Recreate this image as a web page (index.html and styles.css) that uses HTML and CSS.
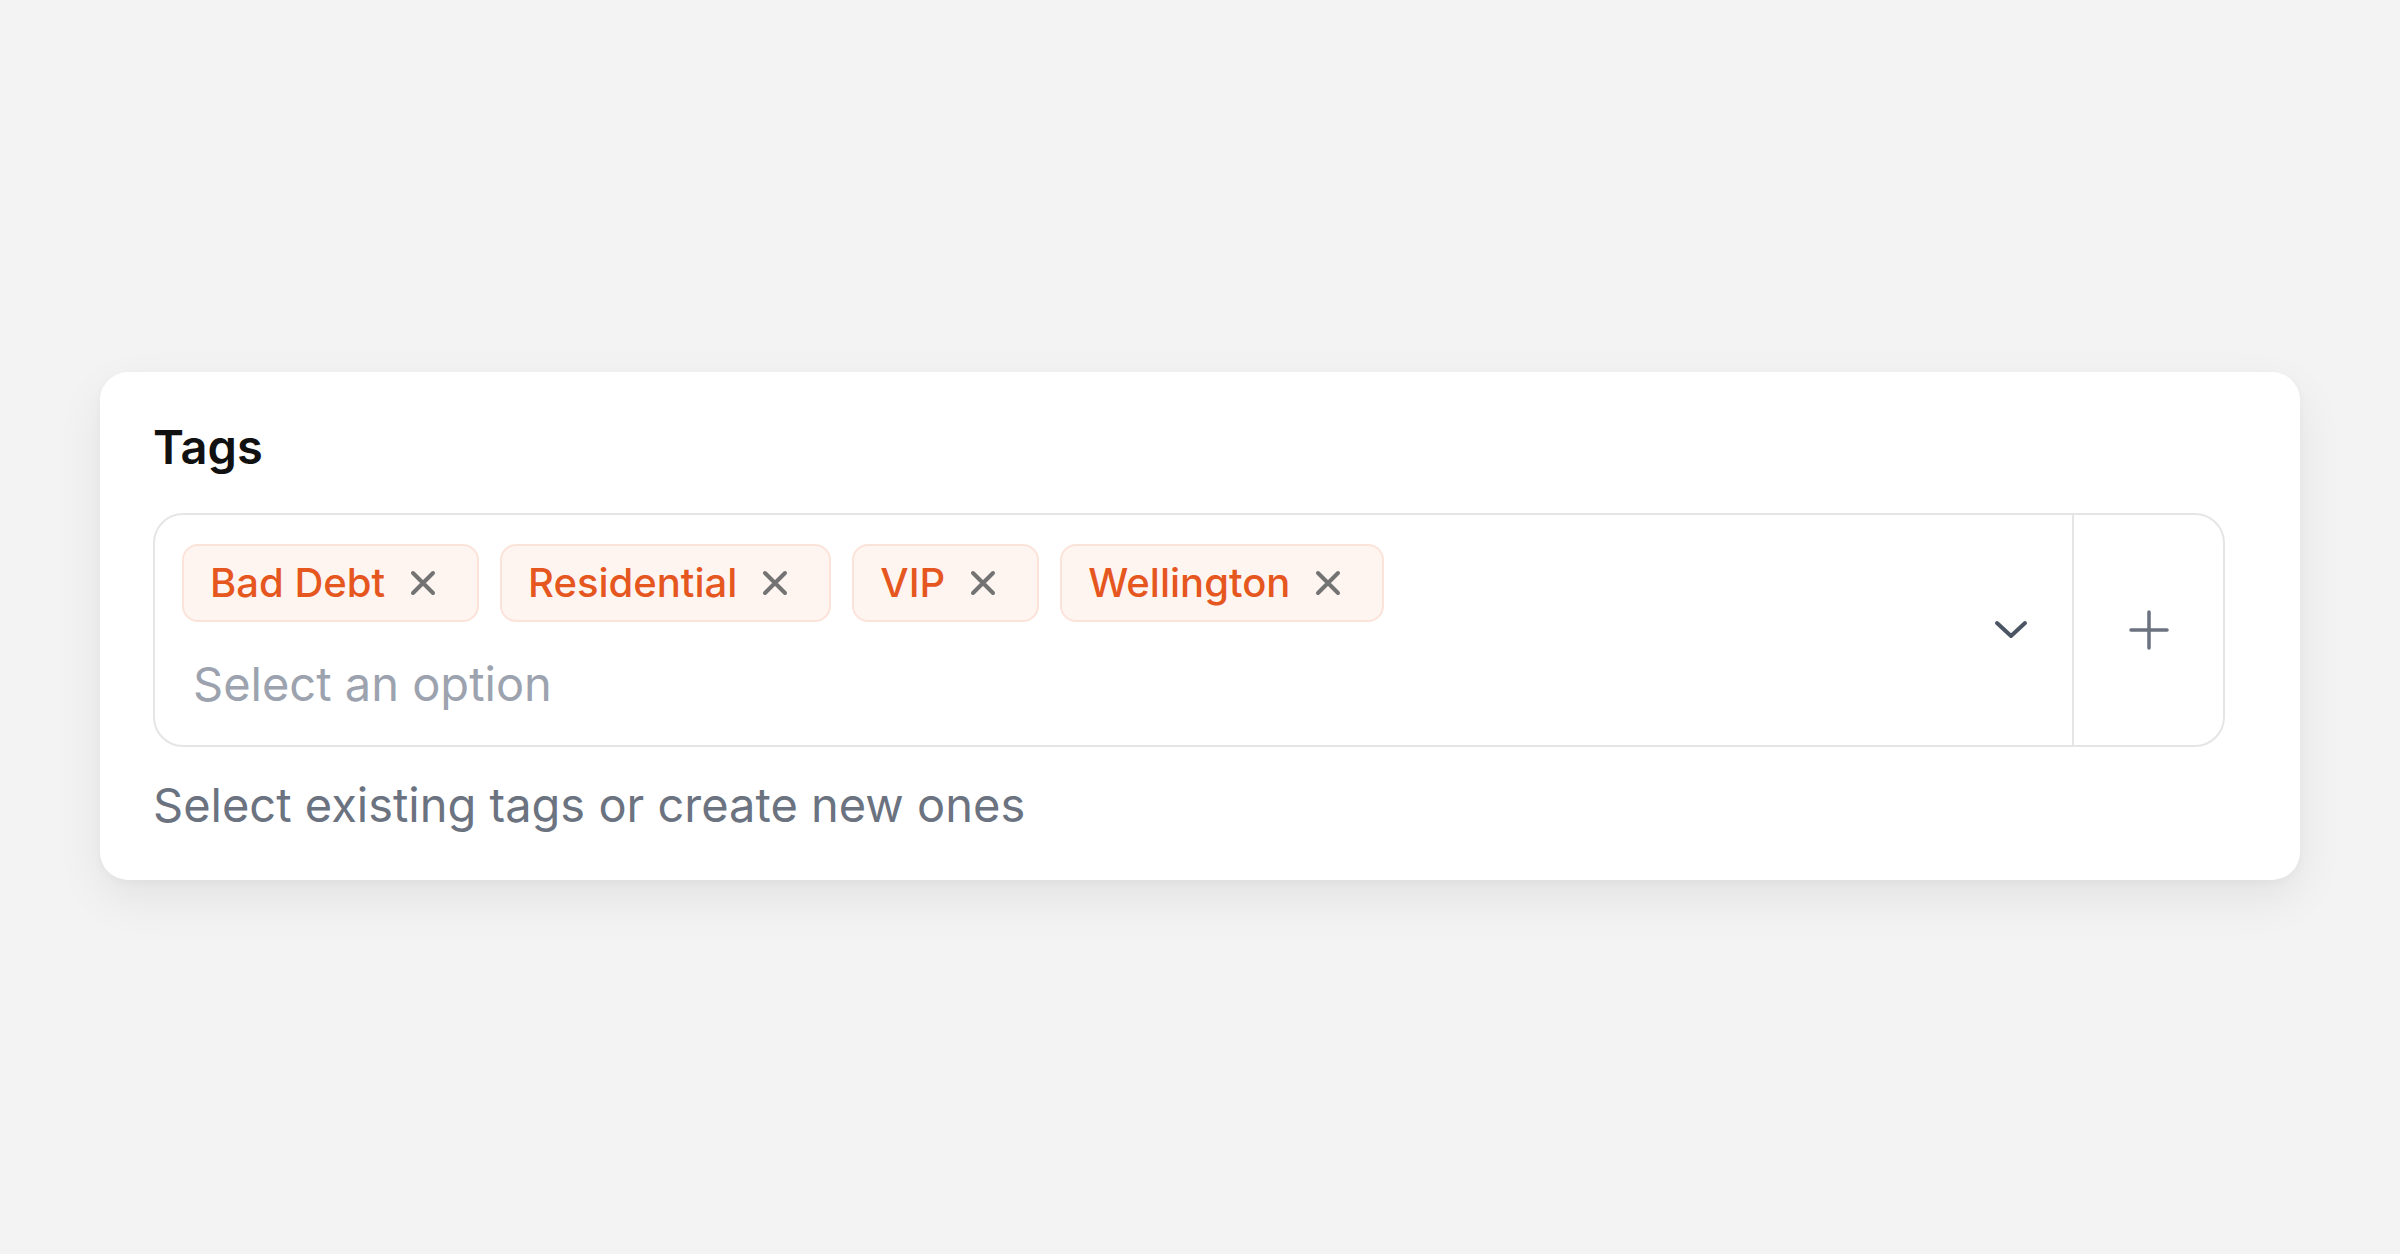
FILE: index.html
```html
<!DOCTYPE html>
<html lang="en">
<head>
<meta charset="utf-8">
<title>Tags</title>
<link rel="stylesheet" href="styles.css">
</head>
<body>
<div class="page">
  <section class="card">
    <div class="label">Tags</div>
    <div class="field">
      <div class="field-main">
        <div class="chips">
          <span class="chip"><span class="chip-text">Bad Debt</span><span class="chip-x"><svg viewBox="0 0 28 28" width="28" height="28"><path d="M4 4 L24 24 M24 4 L4 24"/></svg></span></span>
          <span class="chip"><span class="chip-text">Residential</span><span class="chip-x"><svg viewBox="0 0 28 28" width="28" height="28"><path d="M4 4 L24 24 M24 4 L4 24"/></svg></span></span>
          <span class="chip"><span class="chip-text">VIP</span><span class="chip-x"><svg viewBox="0 0 28 28" width="28" height="28"><path d="M4 4 L24 24 M24 4 L4 24"/></svg></span></span>
          <span class="chip"><span class="chip-text">Wellington</span><span class="chip-x"><svg viewBox="0 0 28 28" width="28" height="28"><path d="M4 4 L24 24 M24 4 L4 24"/></svg></span></span>
        </div>
        <div class="placeholder">Select an option</div>
      </div>
      <div class="field-chevron">
        <svg viewBox="0 0 34 20" width="34" height="20"><polyline points="3,3 17,16 31,3"/></svg>
      </div>
      <div class="field-add">
        <svg viewBox="0 0 40 40" width="40" height="40"><path d="M20 2 V38 M2 20 H38"/></svg>
      </div>
    </div>
    <div class="helper">Select existing tags or create new ones</div>
  </section>
</div>
</body>
</html>
```

FILE: styles.css
```css
html, body {
  margin: 0;
  padding: 0;
}

body {
  background: #f3f3f3;
  font-family: Inter, "Noto Sans", "Liberation Sans", sans-serif;
  width: 2400px;
  height: 1254px;
  overflow: hidden;
}

.page {
  padding: 372px 100px 0 100px;
}

.card {
  width: 2200px;
  box-sizing: border-box;
  background: #ffffff;
  border-radius: 28px;
  padding: 43px 75px 43px 53px;
  box-shadow: 0 18px 48px rgba(0, 0, 0, 0.07), 0 3px 10px rgba(0, 0, 0, 0.03);
}

.label {
  font-size: 47px;
  line-height: 64px;
  font-weight: 600;
  color: #111111;
  margin-bottom: 34px;
}

.field {
  display: flex;
  border: 2px solid #e5e5e5;
  border-radius: 30px;
  height: 234px;
  box-sizing: border-box;
}

.field-main {
  flex: 1;
  padding: 29px 27px 0 27px;
}

.chips {
  display: flex;
  gap: 21px;
  height: 78px;
}

.chip {
  display: flex;
  align-items: center;
  height: 78px;
  box-sizing: border-box;
  padding: 0 40px 0 26px;
  border: 2px solid #fbe3d9;
  background: #fef5f1;
  border-radius: 16px;
}

.chip-text {
  font-size: 40px;
  font-weight: 500;
  color: #e5571f;
  line-height: 1;
}

.chip-x {
  display: flex;
  margin-left: 24px;
}

.chip-x svg {
  fill: none;
  stroke: #737373;
  stroke-width: 4;
  stroke-linecap: round;
}

.placeholder {
  margin-top: 30px;
  padding-left: 11px;
  font-size: 47px;
  line-height: 64px;
  color: #9ca3af;
}

.field-chevron {
  width: 122px;
  display: flex;
  align-items: center;
  justify-content: center;
}

.field-chevron svg {
  fill: none;
  stroke: #4b5563;
  stroke-width: 4;
  stroke-linecap: round;
  stroke-linejoin: round;
}

.field-add {
  width: 149px;
  border-left: 2px solid #e5e5e5;
  display: flex;
  align-items: center;
  justify-content: center;
}

.field-add svg {
  fill: none;
  stroke: #6b7280;
  stroke-width: 3.5;
  stroke-linecap: round;
}

.helper {
  margin-top: 26px;
  font-size: 47px;
  line-height: 64px;
  color: #6b7280;
}
```
